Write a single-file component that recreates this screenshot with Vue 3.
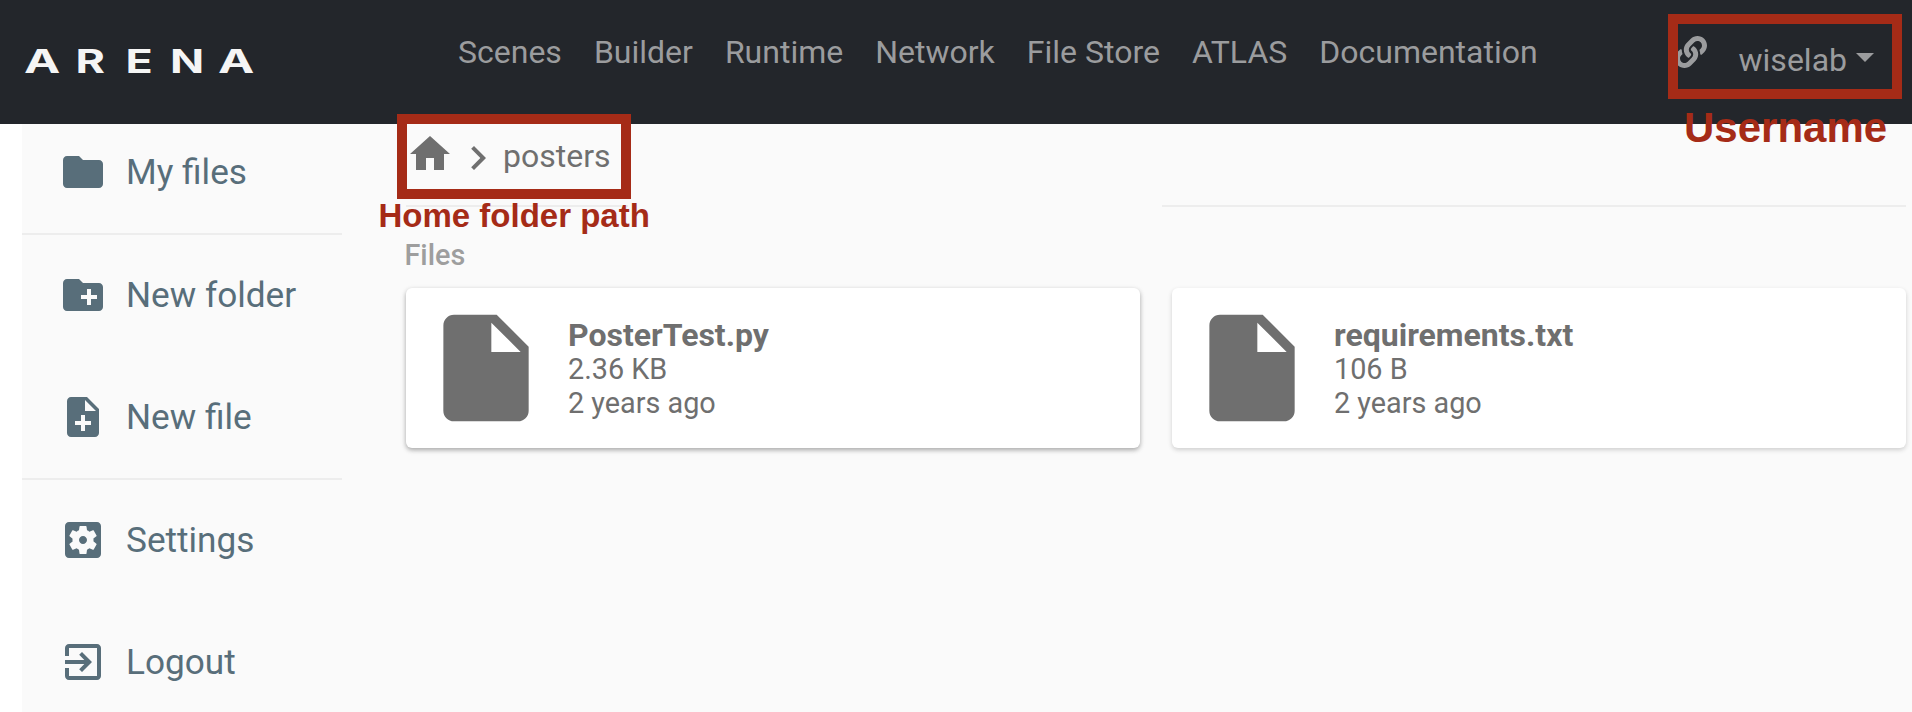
<script setup>
const links = ['Scenes', 'Builder', 'Runtime', 'Network', 'File Store', 'ATLAS', 'Documentation']
const actions = [
  { label: 'My files', end: true, d: 'M10 4H4c-1.1 0-1.99.9-1.99 2L2 18c0 1.1.9 2 2 2h16c1.1 0 2-.9 2-2V8c0-1.1-.9-2-2-2h-8l-2-2z' },
  { label: 'New folder', d: 'M20 6h-8l-2-2H4c-1.11 0-1.99.89-1.99 2L2 18c0 1.11.89 2 2 2h16c1.11 0 2-.89 2-2V8c0-1.11-.89-2-2-2zm-1 8h-3v3h-2v-3h-3v-2h3V9h2v3h3v2z' },
  { label: 'New file', end: true, d: 'M14 2H6c-1.1 0-1.99.9-1.99 2L4 20c0 1.1.89 2 1.99 2H18c1.1 0 2-.9 2-2V8l-6-6zm2 14h-3v3h-2v-3H8v-2h3v-3h2v3h3v2zm-3-7V3.5L18.5 9H13z' },
  { label: 'Settings', d: 'M12 10c-1.1 0-2 .9-2 2s.9 2 2 2 2-.9 2-2-.9-2-2-2zm7-7H5c-1.11 0-2 .9-2 2v14c0 1.1.89 2 2 2h14c1.11 0 2-.9 2-2V5c0-1.1-.89-2-2-2zm-1.75 9c0 .23-.02.46-.05.68l1.48 1.16c.13.11.17.3.08.45l-1.4 2.42c-.09.15-.27.21-.43.15l-1.74-.7c-.36.28-.76.51-1.18.69l-.26 1.85c-.03.17-.18.3-.35.3h-2.8c-.17 0-.32-.13-.35-.29l-.26-1.85c-.43-.18-.82-.41-1.18-.69l-1.74.7c-.16.06-.34 0-.43-.15l-1.4-2.42c-.09-.15-.05-.34.08-.45l1.48-1.16c-.03-.23-.05-.46-.05-.69s.02-.46.05-.68l-1.48-1.16c-.13-.11-.17-.3-.08-.45l1.4-2.42c.09-.15.27-.21.43-.15l1.74.7c.36-.28.76-.51 1.18-.69l.26-1.85c.03-.17.18-.3.35-.3h2.8c.17 0 .32.13.35.29l.26 1.85c.43.18.82.41 1.18.69l1.74-.7c.16-.06.34 0 .43.15l1.4 2.42c.09.15.05.34-.08.45l-1.48 1.16c.03.23.05.46.05.69z' },
  { label: 'Logout', d: 'M10.09 15.59L11.5 17l5-5-5-5-1.41 1.41L12.67 11H3v2h9.67l-2.58 2.59zM19 3H5c-1.11 0-2 .9-2 2v4h2V5h14v14H5v-4H3v4c0 1.1.89 2 2 2h14c1.1 0 2-.9 2-2V5c0-1.1-.9-2-2-2z' },
]
const files = [
  { name: 'PosterTest.py', size: '2.36 KB', modified: '2 years ago', active: true },
  { name: 'requirements.txt', size: '106 B', modified: '2 years ago' },
]
</script>

<template>
  <div class="page">
    <header class="navbar">
      <div class="logo"><span v-for="(c, i) in 'ARENA'" :key="i" :class="{ wide: c === 'A' }">{{ c }}</span></div>
      <nav class="links"><a v-for="l in links" :key="l">{{ l }}</a></nav>
      <div class="account">
        <svg class="link-icon" viewBox="0 0 512 512"><path d="M326.612 185.391c59.747 59.809 58.927 155.698.36 214.59-.11.12-.24.25-.36.37l-67.2 67.2c-59.27 59.27-155.699 59.262-214.96 0-59.27-59.26-59.27-155.7 0-214.96l37.106-37.106c9.84-9.84 26.786-3.3 27.294 10.606.648 17.722 3.826 35.527 9.69 52.721 1.986 5.822.567 12.262-3.783 16.612l-13.087 13.087c-28.026 28.026-28.905 73.66-1.155 101.96 28.024 28.579 74.086 28.749 102.325.51l67.2-67.19c28.191-28.191 28.073-73.757 0-101.83-3.701-3.694-7.429-6.564-10.341-8.569a16.037 16.037 0 0 1-6.947-12.606c-.396-10.567 3.348-21.456 11.698-29.806l21.054-21.055c5.521-5.521 14.182-6.199 20.584-1.731a152.482 152.482 0 0 1 20.522 17.197zM467.547 44.449c-59.261-59.262-155.69-59.27-214.96 0l-67.2 67.2c-.12.12-.25.25-.36.37-58.566 58.892-59.387 154.781.36 214.59a152.454 152.454 0 0 0 20.521 17.196c6.402 4.468 15.064 3.789 20.584-1.731l21.054-21.055c8.35-8.35 12.094-19.239 11.698-29.806a16.037 16.037 0 0 0-6.947-12.606c-2.912-2.005-6.64-4.875-10.341-8.569-28.073-28.073-28.191-73.639 0-101.83l67.2-67.19c28.239-28.239 74.3-28.069 102.325.51 27.75 28.3 26.872 73.934-1.155 101.96l-13.087 13.087c-4.35 4.35-5.769 10.79-3.783 16.612 5.864 17.194 9.042 34.999 9.69 52.721.509 13.906 17.454 20.446 27.294 10.606l37.106-37.106c59.271-59.259 59.271-155.699.001-214.959z" /></svg>
        <span class="user">wiselab</span>
        <i class="caret"></i>
      </div>
    </header>

    <div class="body">
      <aside class="sidebar">
        <a v-for="a in actions" :key="a.label" class="action" :class="{ end: a.end }">
          <svg viewBox="0 0 24 24"><path :d="a.d" /></svg>
          <span>{{ a.label }}</span>
        </a>
      </aside>

      <main class="content">
        <div class="crumbs">
          <svg class="home" viewBox="0 0 24 24"><path d="M10 20v-6h4v6h5v-8h3L12 3 2 12h3v8z" /></svg>
          <svg class="chevron" viewBox="0 0 24 24"><path d="M10 6L8.59 7.41 13.17 12l-4.58 4.59L10 18l6-6z" /></svg>
          <span>posters</span>
        </div>
        <div class="rules"><i></i><i></i></div>
        <h2>Files</h2>
        <div class="cards">
          <article v-for="f in files" :key="f.name" class="card" :class="{ active: f.active }">
            <svg viewBox="0 0 24 24"><path d="M6 2c-1.1 0-1.99.9-1.99 2L4 20c0 1.1.89 2 1.99 2H18c1.1 0 2-.9 2-2V8l-6-6H6zm7 7V3.5L18.5 9H13z" /></svg>
            <div class="info">
              <p class="name">{{ f.name }}</p>
              <p>{{ f.size }}</p>
              <p>{{ f.modified }}</p>
            </div>
          </article>
        </div>
      </main>
    </div>

    <div class="mark mark-path"></div>
    <div class="note note-path">Home folder path</div>
    <div class="mark mark-user"></div>
    <div class="note note-user">Username</div>
  </div>
</template>

<style>
body { margin: 0; background: #fff; overflow: hidden; }
</style>

<style scoped>
.page {
  position: relative;
  display: flex;
  flex-direction: column;
  width: 1912px;
  height: 712px;
  overflow: hidden;
  font-family: Roboto, sans-serif;
  color: #6f6f6f;
}
svg { display: block; flex: none; fill: currentColor; }
p, h2 { margin: 0; }

.navbar {
  display: flex;
  flex: none;
  box-sizing: border-box;
  height: 124px;
  padding-left: 18px;
  background: #23262b;
  color: #9b9c9e;
  font-size: 32px;
  line-height: 48px;
}
.logo {
  display: grid;
  grid-template-columns: repeat(5, 48.4px);
  width: 242px;
  margin: 38px 198px 0 0;
  color: #f5f5f5;
  font: 700 32px/48px Inter, sans-serif;
  text-align: center;
}
.logo span { transform: scaleX(1.4); }
.logo .wide { transform: scaleX(1.52); }
.links { display: flex; gap: 32px; padding-top: 28px; white-space: nowrap; }
.account { display: flex; margin-left: auto; padding-right: 38px; }
.link-icon { width: 32px; height: 32px; margin: 36px 32px 0 0; }
.user { margin-top: 36px; }
.caret {
  width: 0;
  height: 0;
  margin: 53px 0 0 9px;
  border: 9.5px solid transparent;
  border-top-color: #9b9c9e;
  border-bottom: 0;
}

.body { display: flex; flex: 1; gap: 64px; margin-left: 22px; padding-right: 6px; background: #fafafa; }
.sidebar { width: 320px; flex: none; color: #586e7a; }
.action {
  display: flex;
  align-items: center;
  box-sizing: border-box;
  height: 121px;
  padding: 0 0 1px 36.7px;
  font-size: 35.2px;
  line-height: 42px;
}
.action.end { height: 124px; padding-bottom: 0; border-bottom: 2px solid #ededed; }
.action:first-child { height: 111px; padding-bottom: 13px; }
.action:last-child { height: 123px; }
.action svg { width: 48px; height: 48px; margin-right: 19.3px; }

.content { flex: 1; }
.crumbs { display: flex; height: 81px; font-size: 32px; line-height: 38px; }
.crumbs svg { width: 48px; height: 48px; }
.home { margin-top: 6px; }
.chevron { margin-top: 10px; }
.crumbs span { margin: 13px 0 0 1px; }
.rules { display: flex; justify-content: space-between; height: 2px; }
.rules i { width: 744px; background: #ededed; }
.rules i:first-child { width: 222px; }
h2 { margin: 31px 0 0 -1.5px; color: #9e9e9e; font-size: 28.8px; line-height: 34px; font-weight: 500; }
.cards { display: grid; grid-template-columns: 1fr 1fr; gap: 32px; margin-top: 16px; }
.card {
  display: flex;
  align-items: center;
  box-sizing: border-box;
  height: 160px;
  padding: 16px;
  border-radius: 6px;
  background: #fff;
  box-shadow: 0 2px 6px rgba(0, 0, 0, .06), 0 2px 4px rgba(0, 0, 0, .12);
}
.card.active { box-shadow: 0 2px 6px rgba(0, 0, 0, .12), 0 2px 4px rgba(0, 0, 0, .24); }
.card svg { width: 128px; height: 128px; }
.info { margin: 2px 0 0 18px; font-size: 28.8px; line-height: 34px; }
.name { font-size: 32px; font-weight: 700; }

.mark { position: absolute; box-sizing: border-box; width: 234px; height: 85px; border: 10px solid #a52b17; }
.mark-path { left: 397px; top: 114px; }
.mark-user { left: 1668px; top: 14px; }
.note { position: absolute; color: #a52b17; font-family: "Liberation Sans", sans-serif; font-weight: 700; white-space: nowrap; }
.note-path { left: 378.5px; top: 197px; font-size: 33px; line-height: 38px; }
.note-user { left: 1684px; top: 104px; font-size: 42px; line-height: 48px; }
</style>
